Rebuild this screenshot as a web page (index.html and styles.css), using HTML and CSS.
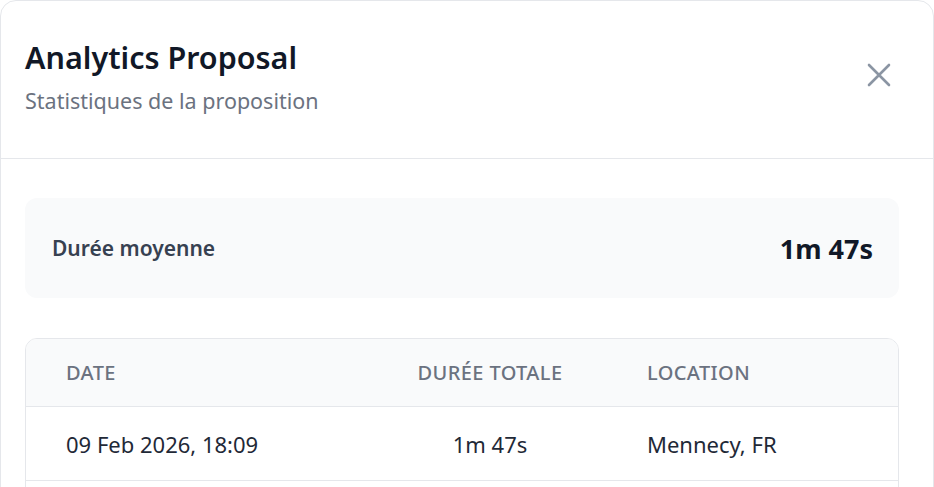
FILE: index.html
```html
<!DOCTYPE html>
<html lang="fr">
<head>
<meta charset="utf-8">
<link rel="stylesheet" href="styles.css">
</head>
<body>
<div class="modal">
  <div class="header">
    <div class="titles">
      <h1 class="title">Analytics Proposal</h1>
      <p class="subtitle">Statistiques de la proposition</p>
    </div>
    <button class="close" aria-label="Fermer">
      <svg width="24" height="24" viewBox="0 0 24 24" fill="none" stroke="currentColor" stroke-width="2.6" stroke-linecap="round"><path d="M2 2l20 20M22 2L2 22"/></svg>
    </button>
  </div>
  <div class="body">
    <div class="stat">
      <span class="stat-label">Durée moyenne</span>
      <span class="stat-value">1m 47s</span>
    </div>
    <div class="table">
      <div class="row head">
        <div class="cell">DATE</div>
        <div class="cell center">DURÉE TOTALE</div>
        <div class="cell">LOCATION</div>
      </div>
      <div class="row">
        <div class="cell">09 Feb 2026, 18:09</div>
        <div class="cell center">1m 47s</div>
        <div class="cell">Mennecy, FR</div>
      </div>
      <div class="row">
        <div class="cell">&nbsp;</div>
        <div class="cell center">&nbsp;</div>
        <div class="cell">&nbsp;</div>
      </div>
    </div>
  </div>
</div>
</body>
</html>
```
FILE: styles.css
```css
* { box-sizing: border-box; }
html, body { margin: 0; padding: 0; background: #ffffff; }
body {
  font-family: "Noto Sans", "Open Sans", sans-serif;
  color: #111827;
  overflow: hidden;
  height: 487px;
}
.modal {
  width: 934px;
  height: 600px;
  border: 1px solid #e5e7eb;
  border-radius: 16px;
  background: #fff;
}
.header {
  display: flex;
  justify-content: space-between;
  align-items: center;
  padding: 0 42px 0 24px;
  height: 158px;
  border-bottom: 1px solid #e5e7eb;
}
.titles { margin-top: -8px; }
.title {
  margin: 0;
  font-size: 30.5px;
  font-weight: 600;
  color: #111827;
  line-height: 40px;
}
.subtitle {
  margin: 10px 0 0;
  font-size: 21.5px;
  color: #6b7280;
  line-height: 28px;
}
.close {
  border: 0;
  background: none;
  padding: 0;
  color: #8b95a3;
  display: flex;
  margin-top: -10px;
}
.body {
  padding: 39px 34px 0 24px;
}
.stat {
  display: flex;
  justify-content: space-between;
  align-items: center;
  height: 100px;
  background: #f9fafb;
  border-radius: 12px;
  padding: 0 26px 0 27px;
}
.stat-label {
  font-size: 21px;
  font-weight: 600;
  color: #374151;
}
.stat-value {
  font-size: 27px;
  font-weight: 700;
  color: #111827;
}
.table {
  margin-top: 40px;
  border: 1px solid #e5e7eb;
  border-radius: 12px;
  overflow: hidden;
}
.row {
  display: grid;
  grid-template-columns: 347px 234px 1fr;
  height: 74px;
  align-items: center;
  border-top: 1px solid #e5e7eb;
  font-size: 22px;
  color: #1f2937;
}
.row.head {
  border-top: 0;
  height: 67px;
  background: #f9fafb;
  color: #6b7280;
  font-size: 20px;
  font-weight: 500;
  letter-spacing: 0.4px;
}
.cell { padding-left: 40px; }
.cell.center { padding-left: 0; text-align: center; }
```
